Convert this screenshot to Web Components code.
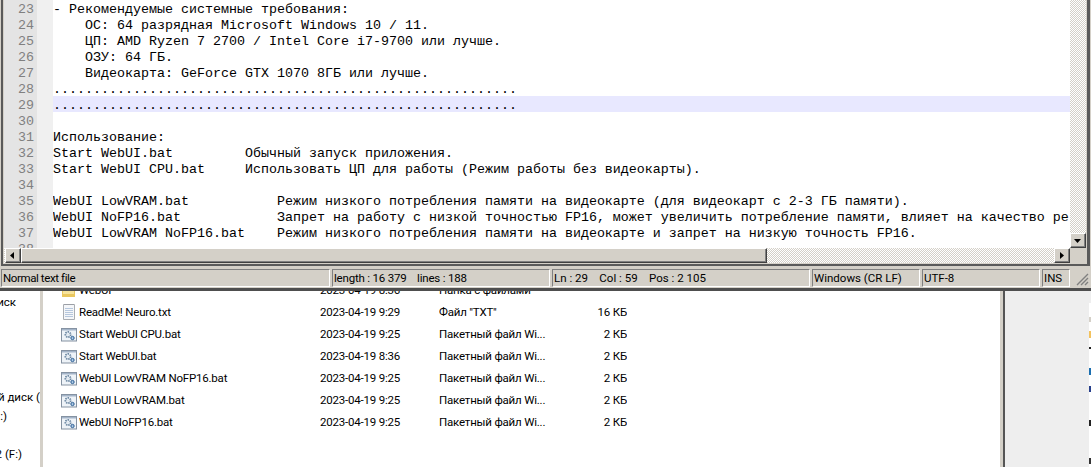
<!DOCTYPE html>
<html>
<head>
<meta charset="utf-8">
<title>Notepad++ over Explorer</title>
<style>
  html, body { margin: 0; padding: 0; background: #fff; overflow: hidden; }
  body { width: 1091px; height: 467px; display: flex; flex-direction: column; }
</style>
</head>
<body>
<npp-window>
  <code-line n="23">- Рекомендуемые системные требования:</code-line>
  <code-line n="24">    ОС: 64 разрядная Microsoft Windows 10 / 11.</code-line>
  <code-line n="25">    ЦП: AMD Ryzen 7 2700 / Intel Core i7-9700 или лучше.</code-line>
  <code-line n="26">    ОЗУ: 64 ГБ.</code-line>
  <code-line n="27">    Видеокарта: GeForce GTX 1070 8ГБ или лучше.</code-line>
  <code-line n="28">..........................................................</code-line>
  <code-line n="29" current>..........................................................</code-line>
  <code-line n="30"></code-line>
  <code-line n="31">Использование:</code-line>
  <code-line n="32">Start WebUI.bat         Обычный запуск приложения.</code-line>
  <code-line n="33">Start WebUI CPU.bat     Использовать ЦП для работы (Режим работы без видеокарты).</code-line>
  <code-line n="34"></code-line>
  <code-line n="35">WebUI LowVRAM.bat           Режим низкого потребления памяти на видеокарте (для видеокарт с 2-3 ГБ памяти).</code-line>
  <code-line n="36">WebUI NoFP16.bat            Запрет на работу с низкой точностью FP16, может увеличить потребление памяти, влияет на качество ре</code-line>
  <code-line n="37">WebUI LowVRAM NoFP16.bat    Режим низкого потребления памяти на видеокарте и запрет на низкую точность FP16.</code-line>
  <code-line n="38"></code-line>
</npp-window>
<explorer-pane>
  <file-row kind="folder" name="WebUI" date="2023-04-19 8:36" type="Папка с файлами" size=""></file-row>
  <file-row kind="txt" name="ReadMe! Neuro.txt" date="2023-04-19 9:29" type="Файл &quot;TXT&quot;" size="16 КБ"></file-row>
  <file-row kind="bat" name="Start WebUI CPU.bat" date="2023-04-19 9:25" type="Пакетный файл Wi..." size="2 КБ"></file-row>
  <file-row kind="bat" name="Start WebUI.bat" date="2023-04-19 8:36" type="Пакетный файл Wi..." size="2 КБ"></file-row>
  <file-row kind="bat" name="WebUI LowVRAM NoFP16.bat" date="2023-04-19 9:25" type="Пакетный файл Wi..." size="2 КБ"></file-row>
  <file-row kind="bat" name="WebUI LowVRAM.bat" date="2023-04-19 9:25" type="Пакетный файл Wi..." size="2 КБ"></file-row>
  <file-row kind="bat" name="WebUI NoFP16.bat" date="2023-04-19 9:25" type="Пакетный файл Wi..." size="2 КБ"></file-row>
</explorer-pane>
<script>
// one editor row: line number comes from the n attribute, text from the slot
class CodeLine extends HTMLElement {
  connectedCallback() {
    this.attachShadow({ mode: 'open' });
    this.shadowRoot.innerHTML = `
      <style>
        :host { display: flex; height: 16px; overflow: hidden; font: 13.33px/19px "Liberation Mono", monospace; color: #000; }
        .num { width: 33px; padding-right: 3px; box-sizing: border-box; text-align: right; background: #e4e4e4; color: #808080; flex: none; }
        .fold { width: 16px; background: #f0f0f0; flex: none; }
        .txt { flex: 1; min-width: 0; overflow: hidden; background: #fff; white-space: pre; }
        :host([current]) .txt { background: #e8e8ff; }
      </style>
      <div class="num">${this.getAttribute('n')}</div>
      <div class="fold"></div>
      <div class="txt"><slot></slot></div>
    `;
  }
}
customElements.define('code-line', CodeLine);

class ScrollBtn extends HTMLElement {
  connectedCallback() {
    this.attachShadow({ mode: 'open' });
    const pts = {
      left: '9,4 9,11 5,7.5',
      right: '6,4 6,11 10,7.5',
      down: '4,6 11,6 7.5,10'
    }[this.getAttribute('dir')];
    this.shadowRoot.innerHTML = `
      <style>
        :host { display: block; width: 16px; height: 15px; flex: none; box-sizing: border-box; background: #d4d0c8;
          border: 1px solid; border-color: #fff #404040 #404040 #fff; box-shadow: inset -1px -1px 0 #808080; }
        svg { display: block; margin: -1px 0 0 -1px; }
      </style>
      <svg width="16" height="15" viewBox="0 0 16 15"><polygon points="${pts}" fill="#000"/></svg>
    `;
  }
}
customElements.define('scroll-btn', ScrollBtn);

class StatusCell extends HTMLElement {
  connectedCallback() {
    this.attachShadow({ mode: 'open' });
    this.shadowRoot.innerHTML = `
      <style>
        :host { display: block; box-sizing: border-box; height: 18px; flex: none; overflow: hidden;
          padding-left: 1px; border: 1px solid; border-color: #808080 #fff #fff #808080;
          font: 11.5px/16px Roboto, sans-serif; color: #000; }
        .t { white-space: pre; }
      </style>
      <div class="t"><slot></slot></div>
    `;
  }
}
customElements.define('status-cell', StatusCell);

class NppWindow extends HTMLElement {
  connectedCallback() {
    this.attachShadow({ mode: 'open' });
    this.shadowRoot.innerHTML = `
      <style>
        :host { display: block; flex: none; height: 291px; box-sizing: border-box; background: #d4d0c8;
          padding: 0 1px; border-bottom: 3px solid #4e4e4e; position: relative; z-index: 1; }
        .frame { height: 266px; box-sizing: border-box; padding: 0 1px 0 1px; border-left: 2px solid #5a5a5a; border-right: 3px solid #5a5a5a; border-bottom: 2px solid #5a5a5a;
          display: flex; flex-direction: column; }
        .main { display: flex; height: 248px; }
        .lines { width: 1066px; height: 248px; overflow: hidden; flex: none; }
        .vbar { width: 16px; flex: none; display: flex; flex-direction: column; justify-content: flex-end;
          background: repeating-conic-gradient(#d4d0c8 0 25%, #fff 0 50%) 0 0 / 2px 2px; }
        .hbar { display: flex; height: 15px; width: 1082px; background: repeating-conic-gradient(#d4d0c8 0 25%, #fff 0 50%) 0 0 / 2px 2px; }
        .hbar scroll-btn:first-child { margin-left: 1px; }
        .thumb { width: 746px; height: 15px; box-sizing: border-box; background: #d4d0c8; border: 1px solid;
          border-color: #fff #404040 #404040 #fff; box-shadow: inset -1px -1px 0 #808080; }
        .spring { flex: 1; }
        .corner { width: 16px; background: #d4d0c8; flex: none; }
        .status { display: flex; align-items: center; gap: 2px; height: 22px; padding: 2px 0 0 0; box-sizing: border-box; }
        .c1 { width: 329px; letter-spacing: -0.4px; } .c2 { width: 218px; letter-spacing: -0.2px; } .c3 { width: 258px; } .c4 { width: 108px; } .c5 { width: 118px; } .c6 { width: 28px; }
        .grip { flex: 1; height: 18px; }
        .grip svg { display: block; }
      </style>
      <div class="frame">
        <div class="main">
          <div class="lines"><slot></slot></div>
          <div class="vbar"><scroll-btn dir="down"></scroll-btn></div>
        </div>
        <div class="hbar">
          <scroll-btn dir="left"></scroll-btn>
          <div class="thumb"></div>
          <div class="spring"></div>
          <scroll-btn dir="right"></scroll-btn>
          <div class="corner"></div>
        </div>
      </div>
      <div class="status">
        <status-cell class="c1">Normal text file</status-cell>
        <status-cell class="c2">length : 16 379    lines : 188</status-cell>
        <status-cell class="c3">Ln : 29    Col : 59    Pos : 2 105</status-cell>
        <status-cell class="c4">Windows (CR LF)</status-cell>
        <status-cell class="c5">UTF-8</status-cell>
        <status-cell class="c6">INS</status-cell>
        <div class="grip"><svg width="17" height="18" viewBox="0 0 17 18">
          <path d="M16 5 L5 16 M16 9 L9 16 M16 13 L13 16" stroke="#808080" stroke-width="1.4"/>
        </svg></div>
      </div>
    `;
  }
}
customElements.define('npp-window', NppWindow);

class FileIcon extends HTMLElement {
  connectedCallback() {
    this.attachShadow({ mode: 'open' });
    const art = {
      folder: `<path d="M1 8h13v7H1z" fill="#e9c75f"/><path d="M2 9h11v3H2z" fill="#f6e39c"/>`,
      txt: `<path d="M2.5 .5h11v15h-11z" fill="#f4f6f9" stroke="#a9adb3"/>
            <path d="M4 1V0M6 1V0M8 1V0M10 1V0M12 1V0" stroke="#8d9198"/>
            <path d="M4 4.5h8M4 6.5h8M4 8.5h8M4 10.5h8M4 12.5h8" stroke="#b6c7dd"/>`,
      bat: `<rect x=".5" y="2.5" width="15" height="12.5" fill="#eef3f8" stroke="#8592a2"/>
            <rect x="1" y="3" width="14" height="1.5" fill="#a3b4c8"/>
            <circle cx="7" cy="8.5" r="2.6" fill="none" stroke="#66839f" stroke-width="1.8" stroke-dasharray="1.4 .9"/>
            <circle cx="7" cy="8.5" r="1" fill="#dfe7ef"/>
            <circle cx="11.5" cy="12" r="1.7" fill="#7ea6cf" stroke="#3f6c9c"/>
            <circle cx="11.5" cy="12" r=".6" fill="#e6f0fa"/>`
    }[this.getAttribute('kind')];
    this.shadowRoot.innerHTML = `
      <style>
        :host { display: block; width: 16px; height: 16px; flex: none; }
        svg { display: block; }
      </style>
      <svg width="16" height="16" viewBox="0 0 16 16">${art}</svg>
    `;
  }
}
customElements.define('file-icon', FileIcon);

class FileRow extends HTMLElement {
  connectedCallback() {
    this.attachShadow({ mode: 'open' });
    const a = n => this.getAttribute(n);
    this.shadowRoot.innerHTML = `
      <style>
        :host { display: grid; grid-template-columns: 18px 241px 119px 118px 70px; height: 22px; align-items: center;
          font: 11.5px/23px Roboto, sans-serif; letter-spacing: -0.2px; color: #000; }
        .t { white-space: pre; height: 22px; overflow: hidden; }
        .size { text-align: right; }
      </style>
      <file-icon kind="${a('kind')}"></file-icon>
      <div class="t">${a('name')}</div>
      <div class="t">${a('date')}</div>
      <div class="t">${a('type').replace(/"/g, '&quot;')}</div>
      <div class="t size">${a('size')}</div>
    `;
  }
}
customElements.define('file-row', FileRow);

class ExplorerPane extends HTMLElement {
  connectedCallback() {
    this.attachShadow({ mode: 'open' });
    this.shadowRoot.innerHTML = `
      <style>
        :host { display: flex; flex: 1; min-height: 0; overflow: hidden; background: #fff; font: 11.5px Roboto, sans-serif; color: #000; }
        .nav { width: 40px; flex: none; overflow: hidden; display: flex; flex-direction: column; }
        .nav div { height: 19px; line-height: 19px; white-space: pre; display: flex; justify-content: flex-end; overflow: hidden; }
        .split { width: 3px; background: #d4d0c8; flex: none; }
        .list { width: 957px; flex: none; box-sizing: border-box; padding-left: 18px; margin-top: -12px; }
        .split2 { width: 3px; background: #d4d0c8; flex: none; }
        .dark { width: 2px; background: #555; flex: none; }
        .side { width: 84px; background: #eee; flex: none; }
        .edge { flex: 1; background: linear-gradient(#eee 0 12px, #fff 12px 26px, #d4d0c8 26px 31px, #fff 31px 40px, #f3c25e 40px 47px, #fff 47px 56px, #222 56px 58px, #fff 58px 77px, #1b6fb0 77px 84px, #fff 84px 95px, #28408c 95px 101px, #fff 101px 129px, #222 129px 135px, #fff 135px 167px, #333 167px 173px, #fff 173px); }
      </style>
      <div class="nav">
        <div style="margin-top:2px;width:16px">иск</div>
        <div style="margin-top:76px">й диск (</div>
        <div style="width:7px">:)</div>
        <div style="margin-top:19px;width:22px">2 (F:)</div>
      </div>
      <div class="split"></div>
      <div class="list"><slot></slot></div>
      <div class="split2"></div>
      <div class="dark"></div>
      <div class="side"></div>
      <div class="edge"></div>
    `;
  }
}
customElements.define('explorer-pane', ExplorerPane);
</script>
</body>
</html>
